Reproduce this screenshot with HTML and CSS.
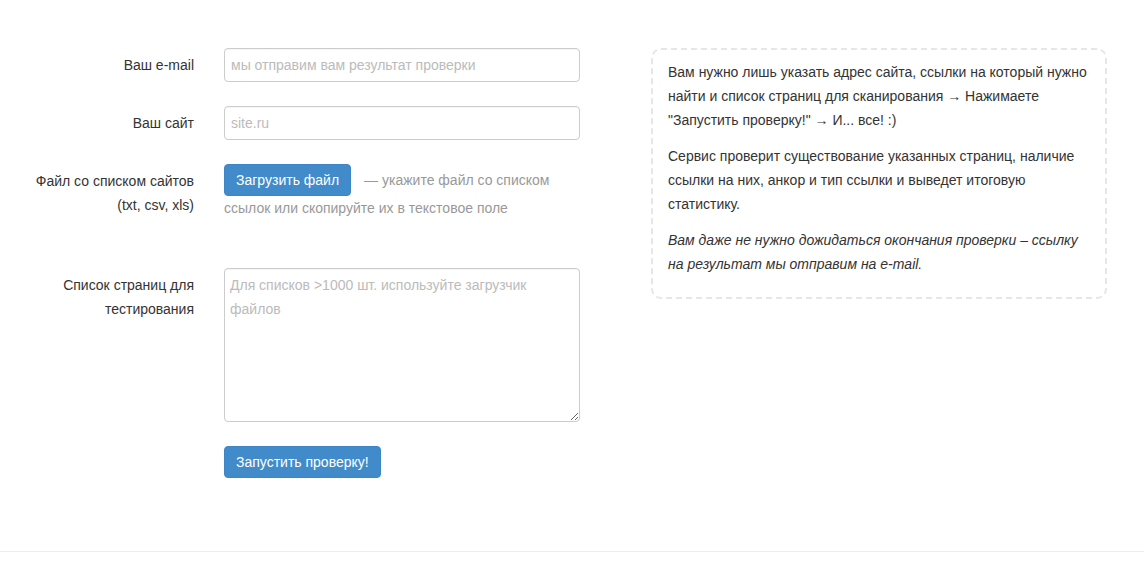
FILE: index.html
```html
<!DOCTYPE html>
<html lang="ru">
<head>
<meta charset="utf-8">
<title>Проверка ссылок</title>
<link rel="stylesheet" href="styles.css">
</head>
<body>
<div class="page">
  <form class="form">
    <label class="lbl" for="email">Ваш e-mail</label>
    <div class="field"><input class="inp" id="email" type="text" placeholder="мы отправим вам результат проверки"></div>

    <label class="lbl" for="site">Ваш сайт</label>
    <div class="field"><input class="inp" id="site" type="text" placeholder="site.ru"></div>

    <label class="lbl">Файл со списком сайтов<br>(txt, csv, xls)</label>
    <div class="field file-field"><button type="button" class="btn">Загрузить файл</button><span class="hint hint-first">— укажите файл со списком</span><br><span class="hint">ссылок или скопируйте их в текстовое поле</span></div>

    <label class="lbl lbl-list" for="list">Список страниц для тестирования</label>
    <div class="field"><textarea class="area" id="list" placeholder="Для списков >1000 шт. используйте загрузчик файлов"></textarea></div>

    <div class="lbl"></div>
    <div class="field"><button type="button" class="btn">Запустить проверку!</button></div>
  </form>

  <div class="info">
    <p>Вам нужно лишь указать адрес сайта, ссылки на который нужно найти и список страниц для сканирования → Нажимаете "Запустить проверку!" → И... все! :)</p>
    <p>Сервис проверит существование указанных страниц, наличие ссылки на них, анкор и тип ссылки и выведет итоговую статистику.</p>
    <p class="note">Вам даже не нужно дожидаться окончания проверки – ссылку на результат мы отправим на e-mail.</p>
  </div>
</div>
<div class="footer"></div>
</body>
</html>
```
FILE: styles.css
```css
html, body {
  margin: 0;
  padding: 0;
  background: #fff;
}
body {
  font-family: "Liberation Sans", Arial, sans-serif;
  font-size: 14px;
  line-height: 24px;
  color: #333;
}
.page {
  display: flex;
  align-items: flex-start;
  padding-top: 48px;
  height: 551px;
  box-sizing: border-box;
}
.form {
  display: grid;
  grid-template-columns: 170px 356px;
  column-gap: 30px;
  row-gap: 24px;
  padding-left: 24px;
  margin: 0;
}
.lbl {
  text-align: right;
  padding-top: 5px;
  line-height: 24px;
}
.field {
  line-height: 24px;
}
.file-field {
  margin-bottom: 24px;
}
.inp, .area {
  display: block;
  width: 356px;
  box-sizing: border-box;
  border: 1px solid #ccc;
  border-radius: 4px;
  font-family: "Liberation Sans", Arial, sans-serif;
  font-size: 14px;
  color: #555;
  background: #fff;
  margin: 0;
  outline: none;
  box-shadow: inset 0 1px 1px rgba(0,0,0,0.04);
}
.inp {
  height: 34px;
  padding: 6px 6px;
  line-height: 20px;
}
.area {
  height: 154px;
  padding: 4px 5px;
  line-height: 24px;
  resize: vertical;
}
.inp::placeholder, .area::placeholder {
  color: #bbb;
  opacity: 1;
}
.btn {
  display: inline-block;
  font-family: "Liberation Sans", Arial, sans-serif;
  font-size: 14px;
  line-height: 20px;
  padding: 5px 11px;
  color: #fff;
  background: #428bca;
  border: 1px solid #3d85c4;
  border-radius: 4px;
  margin: 0;
  cursor: pointer;
  vertical-align: baseline;
}
.hint {
  color: #999;
}
.hint-first {
  margin-left: 13px;
}
.info {
  margin-left: 71px;
  width: 456px;
  box-sizing: border-box;
  border: 2px dashed #e6e6e6;
  border-radius: 10px;
  padding: 10px 15px 9px;
}
.info p {
  margin: 0 0 12px;
}
.info .note {
  font-style: italic;
}
.footer {
  border-top: 1px solid #eee;
  height: 25px;
}
```
